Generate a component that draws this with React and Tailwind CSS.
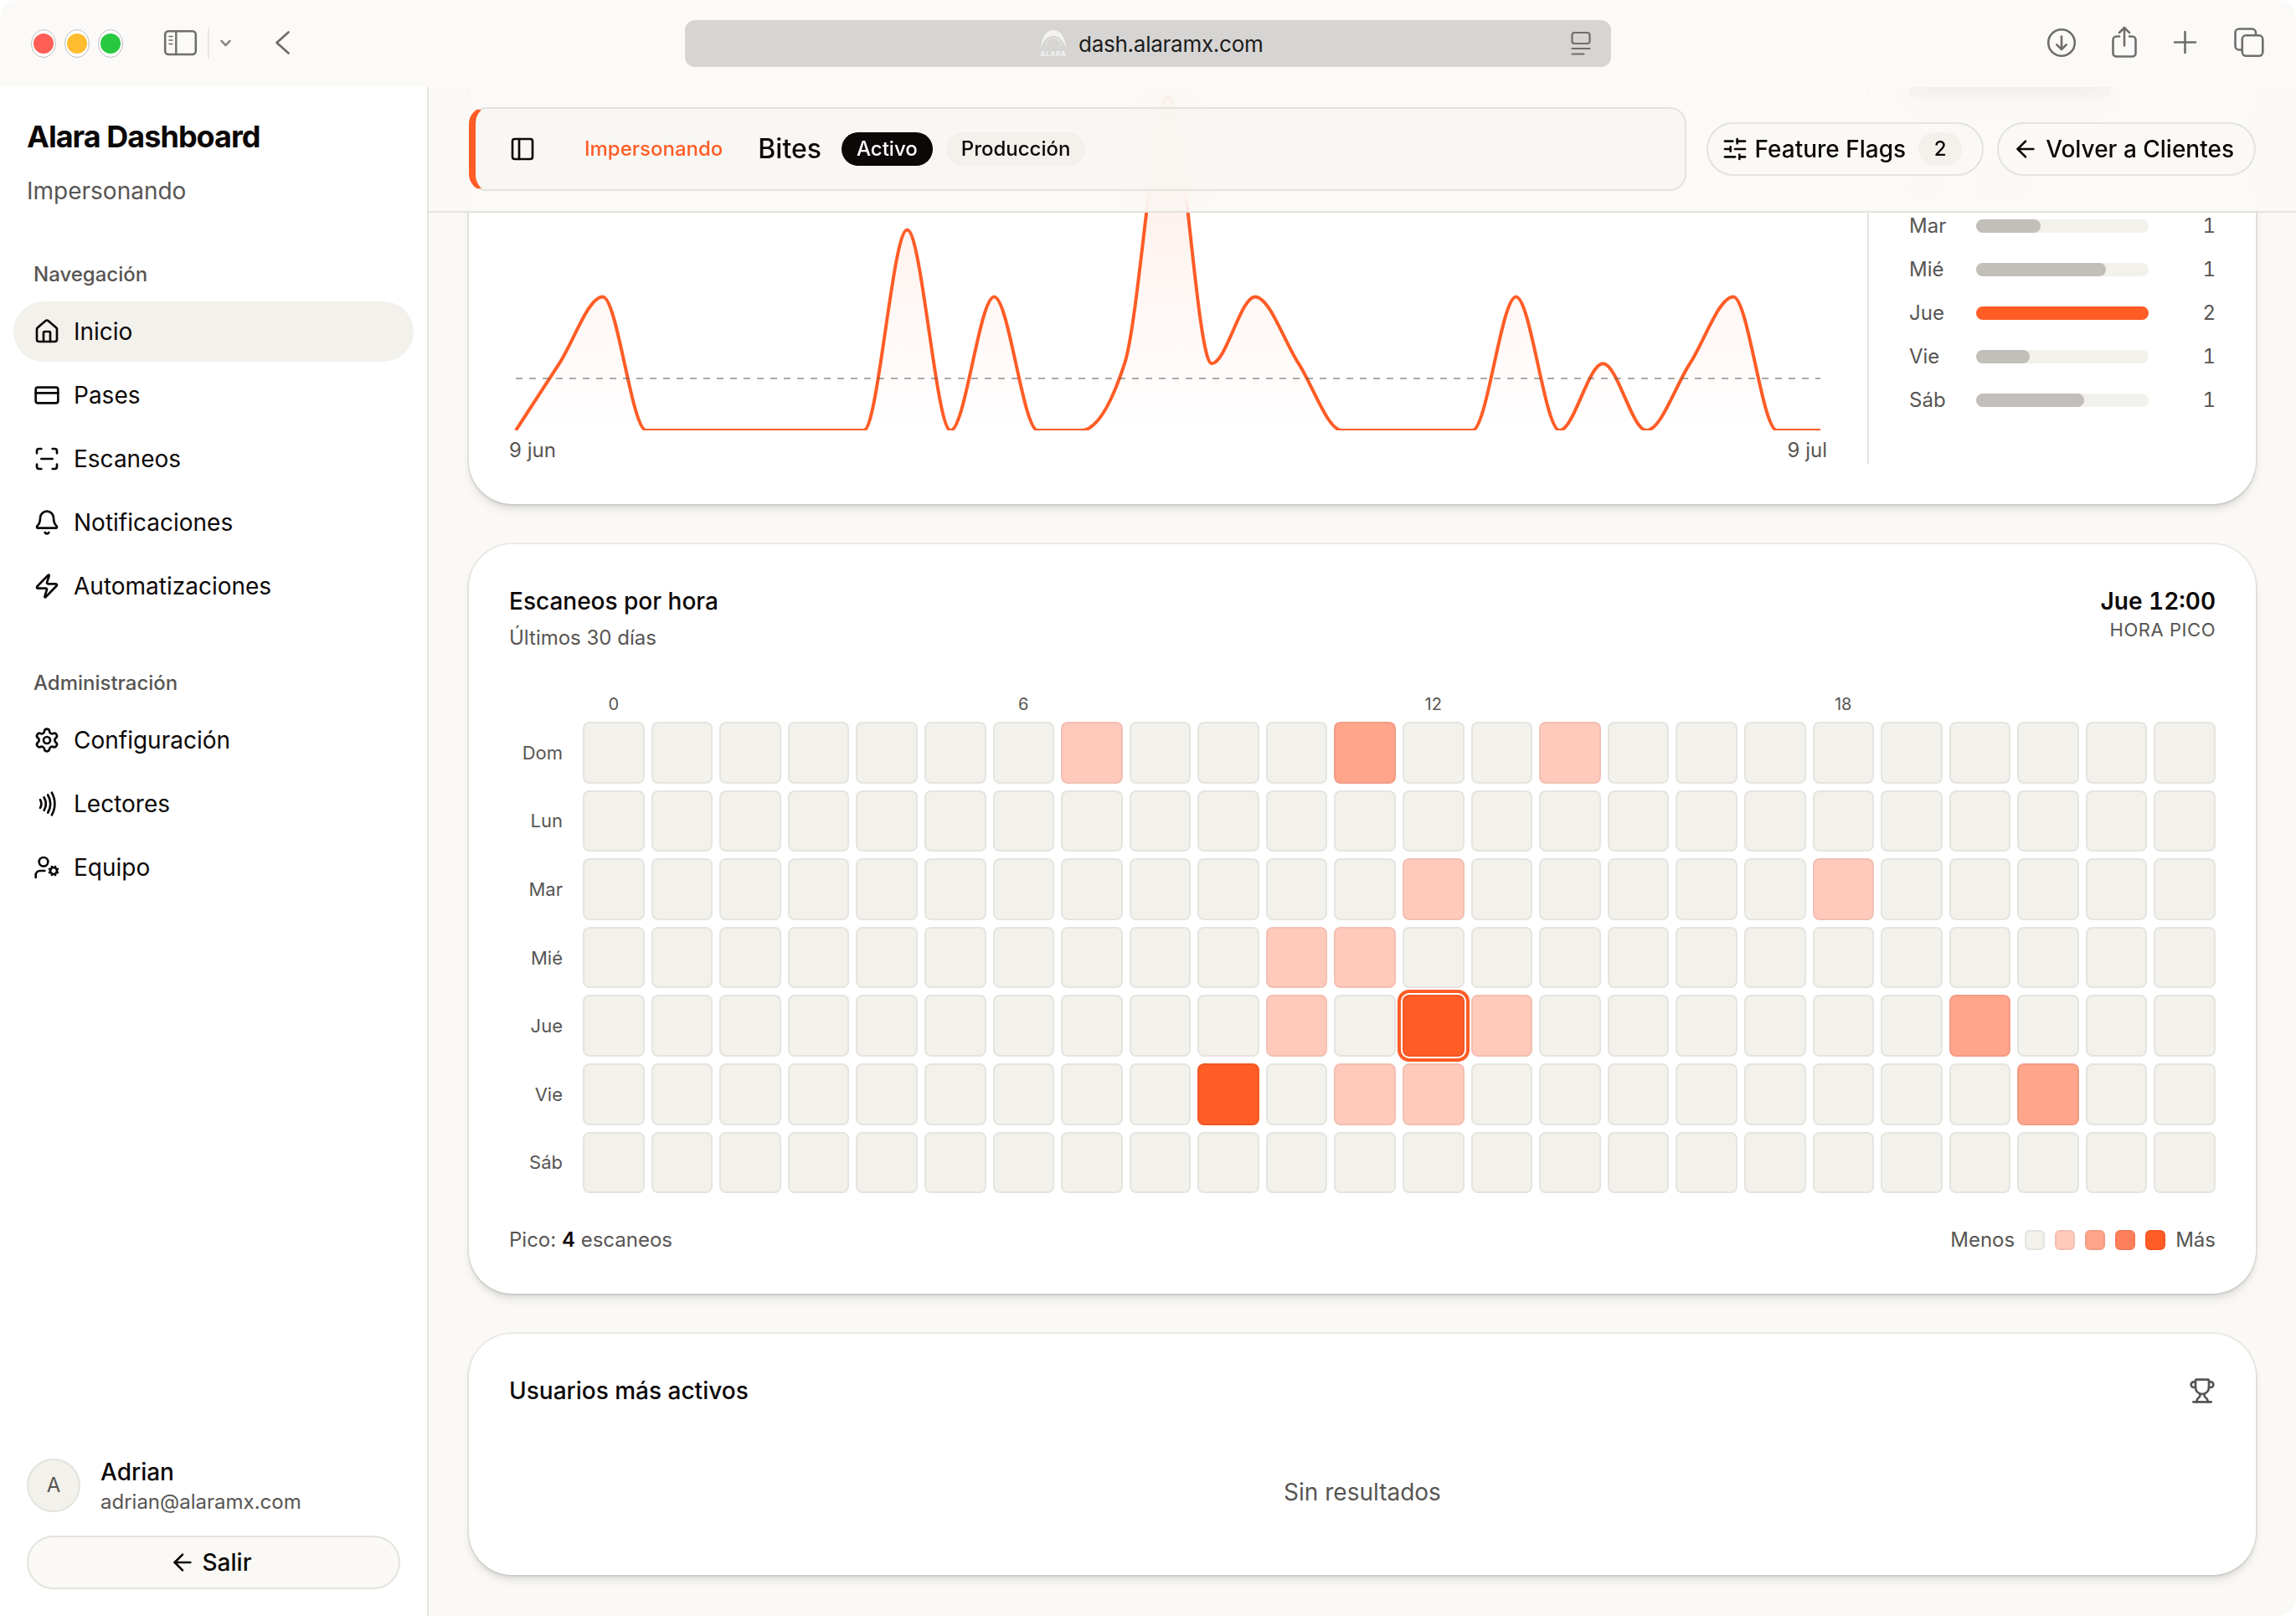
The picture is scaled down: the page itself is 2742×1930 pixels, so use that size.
import React from 'react';
import {
  ArrowLeft,
  Bell,
  CreditCard,
  House,
  Nfc,
  PanelLeft,
  ScanLine,
  Settings,
  SlidersHorizontal,
  Trophy,
  UserCog,
  Zap,
} from 'lucide-react';

const navItems = [
  { label: "Inicio", icon: House, active: true },
  { label: "Pases", icon: CreditCard },
  { label: "Escaneos", icon: ScanLine },
  { label: "Notificaciones", icon: Bell },
  { label: "Automatizaciones", icon: Zap },
];

const adminItems = [
  { label: "Configuración", icon: Settings },
  { label: "Lectores", icon: Nfc },
  { label: "Equipo", icon: UserCog },
];

const weekdays = [
  { day: "Mar", width: 37.4, value: 1 },
  { day: "Mié", width: 75.2, value: 1 },
  { day: "Jue", width: 100, value: 2, top: true },
  { day: "Vie", width: 31, value: 1 },
  { day: "Sáb", width: 62.7, value: 1 },
];

const dailyScans = [0, 1, 2, 0, 0, 0, 0, 0, 0, 3, 0, 2, 0, 0, 1, 5, 1, 2, 1, 0, 0, 0, 0, 2, 0, 1, 0, 1, 2, 0, 0];

const dayNames = ["Dom", "Lun", "Mar", "Mié", "Jue", "Vie", "Sáb"];
const hours = Array.from({ length: 24 }, (_, i) => i);

// "day-hour" -> intensity level
const heat = {
  "0-7": 1, "0-11": 2, "0-14": 1,
  "2-12": 1, "2-18": 1,
  "3-10": 1, "3-11": 1,
  "4-10": 1, "4-12": 4, "4-13": 1, "4-20": 2,
  "5-9": 4, "5-11": 1, "5-12": 1, "5-21": 2,
};

const levels = ["bg-[#f3f1eb]", "bg-[#ffcabb]", "bg-[#ffa58c]", "bg-[#ff815c]", "bg-[#ff5c26]"];

// Monotone cubic interpolation
const monotonePath = (points) => {
  const n = points.length;
  const s = [];
  for (let i = 0; i < n - 1; i++) {
    s.push((points[i + 1][1] - points[i][1]) / (points[i + 1][0] - points[i][0]));
  }
  const t = points.map((_, i) => {
    if (i === 0 || i === n - 1) return null;
    const p = (s[i - 1] + s[i]) / 2;
    return (Math.sign(s[i - 1]) + Math.sign(s[i])) * Math.min(Math.abs(s[i - 1]), Math.abs(s[i]), 0.5 * Math.abs(p));
  });
  t[0] = (3 * s[0] - t[1]) / 2;
  t[n - 1] = (3 * s[n - 2] - t[n - 2]) / 2;

  let d = `M${points[0][0]},${points[0][1]}`;
  for (let i = 0; i < n - 1; i++) {
    const [x0, y0] = points[i];
    const [x1, y1] = points[i + 1];
    const dx = (x1 - x0) / 3;
    d += `C${x0 + dx},${y0 + dx * t[i]},${x1 - dx},${y1 - dx * t[i + 1]},${x1},${y1}`;
  }
  return d;
};

const ScansChart = () => {
  const points = dailyScans.map((v, i) => [8 + (i * 1558) / 30, 410 - v * 79.8]);
  const line = monotonePath(points);

  return (
    <svg width="1574" height="410" viewBox="0 0 1574 410" className="block">
      <defs>
        <linearGradient id="scans" x1="0" y1="11" x2="0" y2="410" gradientUnits="userSpaceOnUse">
          <stop offset="0" stopColor="#ff5c26" stopOpacity="0.12" />
          <stop offset="1" stopColor="#ff5c26" stopOpacity="0" />
        </linearGradient>
      </defs>
      <path d={`${line}V410H8Z`} fill="url(#scans)" />
      <path d={line} fill="none" stroke="#ff5c26" strokeWidth="4" />
      <line x1="8" y1="348" x2="1566" y2="348" stroke="#575553" strokeOpacity="0.5" strokeWidth="2" strokeDasharray="8 8" />
    </svg>
  );
};

const BrowserBar = () => (
  <div className="flex h-[104px] shrink-0 items-start bg-[#fbfaf8] text-[#6f6e6c]">
    <svg width="360" height="104" viewBox="0 0 360 104" fill="none" stroke="currentColor" strokeLinecap="round" strokeLinejoin="round">
      <g strokeWidth="0.7" stroke="#a3a3a3" fill="#fff">
        <ellipse cx="52" cy="52" rx="14.3" ry="16.5" />
        <ellipse cx="92" cy="52" rx="14.3" ry="16.5" />
        <ellipse cx="132" cy="52" rx="14.3" ry="16.5" />
      </g>
      <circle cx="52" cy="52" r="12" fill="#ff5f57" stroke="none" />
      <circle cx="92" cy="52" r="12" fill="#febc2e" stroke="none" />
      <circle cx="132" cy="52" r="12" fill="#28c840" stroke="none" />
      <rect x="197.2" y="37.2" width="36.6" height="27.8" rx="4" strokeWidth="2.6" />
      <path d="M210.3 37v28" strokeWidth="2.4" />
      <path d="M202 43.5h4M202 48h4M202 52.5h4" strokeWidth="1.6" />
      <path d="M249 34v36" stroke="#e8e7e5" strokeWidth="2" strokeLinecap="butt" />
      <path d="M264.5 48.8l5 5.3 5-5.3" strokeWidth="2.6" stroke="#8a8987" />
      <path d="M344.5 38.5L330.5 51l14 12.5" strokeWidth="2.8" />
    </svg>
    <div className="ml-[458px] mt-6 flex h-14 w-[1106px] items-center rounded-xl bg-[#d6d5d3] pr-[24px]">
      <div className="ml-[423px] flex w-[34px] flex-col items-center text-[#f4f3f2]">
        <svg width="34" height="24" viewBox="0 0 34 24">
          <path d="M2 22C3 9 8 0 17 0s14 9 15 22C29 12 24 7 17 7S5 12 2 22z" fill="currentColor" />
          <path d="M7 19C9 12 13 9.5 17 9.5S25 12 27 19" fill="none" stroke="#e6e4e2" strokeWidth="1.5" />
        </svg>
        <span className="text-[8px] font-bold leading-[8px] tracking-[0.08em]">ALARA</span>
      </div>
      <span className="ml-[13px] pt-px text-[26px] leading-8 tracking-[-0.01em] text-[#1c1b1a]">dash.alaramx.com</span>
      <svg className="ml-auto" width="24" height="30" viewBox="0 0 24 30" fill="none" stroke="currentColor" strokeWidth="2.2" strokeLinecap="round">
        <rect x="1.5" y="2" width="21" height="13" rx="3" />
        <path d="M1.5 21h21M1.5 27.5h14" />
      </svg>
    </div>
    <svg className="ml-auto" width="342" height="104" viewBox="2400 0 342 104" fill="none" stroke="currentColor" strokeWidth="2.6" strokeLinecap="round" strokeLinejoin="round">
      <circle cx="2462" cy="51" r="15.8" />
      <path d="M2462 43.5v15M2456.3 53.3l5.7 5.7 5.7-5.7" />
      <path d="M2531 43.5h-3.5a4 4 0 0 0-4 4v16a4 4 0 0 0 4 4h19a4 4 0 0 0 4-4v-16a4 4 0 0 0-4-4h-3.5M2537 54.5V33.5M2531 39l6-6 6 6" />
      <path d="M2609.5 38v25M2597 50.5h25" />
      <rect x="2677.8" y="42.3" width="24.5" height="24.5" rx="4.5" />
      <path d="M2677.5 59.5h-3.5a4.5 4.5 0 0 1-4.5-4.5V39a4.5 4.5 0 0 1 4.5-4.5h15.5a4.5 4.5 0 0 1 4.5 4.5v3" />
    </svg>
  </div>
);

const NavGroup = ({ title, items }) => (
  <div className="px-4">
    <div className="flex h-16 items-center pl-6 text-[24px] font-medium text-[#575553]">{title}</div>
    <div className="flex flex-col gap-1">
      {items.map(({ label, icon: Icon, active }) => (
        <div key={label} className={`flex h-[72px] items-center gap-4 rounded-full px-6 text-[28px] ${active ? "bg-[#f3f1ec]" : ""}`}>
          <Icon size={32} />
          <span>{label}</span>
        </div>
      ))}
    </div>
  </div>
);

const Sidebar = () => (
  <aside className="flex w-[512px] shrink-0 flex-col border-r-2 border-[#e4e3de] bg-white">
    <div className="px-8 pt-[39px]">
      <h1 className="text-[36px] font-bold leading-[40px] tracking-[-0.027em]">Alara Dashboard</h1>
      <p className="mt-[25px] text-[28px] leading-[40px] text-[#575553]">Impersonando</p>
    </div>
    <nav className="mt-12 flex flex-col gap-12">
      <NavGroup title="Navegación" items={navItems} />
      <NavGroup title="Administración" items={adminItems} />
    </nav>
    <div className="mt-auto px-8 pb-8">
      <div className="flex h-16 items-center gap-6">
        <div className="flex size-16 items-center justify-center rounded-full border-2 border-[#e4e3de] bg-[#f3f1ec] text-[24px] text-[#575553]">A</div>
        <div className="pt-[3px]">
          <p className="text-[28px] font-medium leading-[36px]">Adrian</p>
          <p className="text-[24px] leading-[35px] text-[#575553]">adrian@alaramx.com</p>
        </div>
      </div>
      <button className="mt-7 flex h-16 w-full items-center justify-center gap-2 rounded-full border-2 border-[#e4e3de] bg-[#faf9f5] pr-2 text-[28px] font-medium">
        <ArrowLeft size={32} />
        Salir
      </button>
    </div>
  </aside>
);

const TopBar = () => (
  <header className="relative z-10 flex h-[150px] shrink-0 items-center gap-6 border-b-2 border-[#e4e3de] bg-[#faf9f6]/80 px-12 backdrop-blur-[20px]">
    <div className="flex h-[100px] flex-1 items-center rounded-[20px] border-2 border-l-8 border-[#e4e3de] border-l-[#ff5c26] bg-[#f7f5f1]/50 pl-10">
      <PanelLeft size={32} />
      <span className="ml-[58px] text-[24px] font-medium text-[#ff5c26]">Impersonando</span>
      <span className="ml-[42px] text-[32px] font-medium">Bites</span>
      <span className="ml-6 flex h-10 items-center rounded-full bg-[#0c0807] px-[18px] text-[24px] font-medium text-white">Activo</span>
      <span className="ml-4 flex h-10 items-center rounded-full bg-[#f3f1ec] px-[18px] text-[24px] font-medium">Producción</span>
    </div>
    <div className="flex items-center gap-4">
      <button className="flex h-16 items-center gap-2 rounded-full border-2 border-[#e4e3de] bg-[#faf9f5] pl-4 pr-6 text-[28px] font-medium">
        <SlidersHorizontal size={32} />
        Feature Flags
        <span className="ml-[7px] flex h-10 w-[52px] items-center justify-center rounded-full bg-[#f3f1ec] text-[24px]">2</span>
      </button>
      <button className="flex h-16 items-center gap-2 rounded-full border-2 border-[#e4e3de] bg-[#faf9f5] pl-4 pr-6 text-[28px] font-medium">
        <ArrowLeft size={32} />
        Volver a Clientes
      </button>
    </div>
  </header>
);

const Card = ({ className, children }) => (
  <section className={`rounded-[52px] bg-white px-12 shadow-[0_0_0_2px_rgba(12,8,7,0.06),0_8px_12px_-2px_rgba(0,0,0,0.1),0_4px_8px_-4px_rgba(0,0,0,0.12)] ${className}`}>
    {children}
  </section>
);

const ActivityCard = () => (
  <Card className="flex h-[538px] shrink-0 pb-12 pt-10">
    <div className="w-[1574px]">
      <ScansChart />
      <div className="mt-2 flex justify-between text-[24px] leading-8 text-[#575553]">
        <span>9 jun</span>
        <span>9 jul</span>
      </div>
    </div>
    <div className="ml-12 flex flex-1 flex-col border-l-2 border-[#e4e3de] pl-12">
      <div className="h-3 w-[240px] bg-[#c2beb9]" />
      <div className="mt-[94px] flex h-4 gap-10">
        <div className="w-10 bg-[#c2beb9]/40" />
        <div className="w-16 bg-[#c2beb9]/40" />
      </div>
      <div className="mt-[28px] flex flex-col gap-5">
        {weekdays.map((row) => (
          <div key={row.day} className="flex h-8 items-center gap-4 text-[24px] text-[#575553]">
            <span className="w-16">{row.day}</span>
            <div className="h-4 flex-1 rounded-full bg-[#f3f1ec]">
              <div className={`h-full rounded-full ${row.top ? "bg-[#ff5c26]" : "bg-[#c2beb9]"}`} style={{ width: `${row.width}%` }} />
            </div>
            <span className="w-16 text-right tabular-nums">{row.value}</span>
          </div>
        ))}
      </div>
    </div>
  </Card>
);

const HeatmapCard = () => (
  <Card className="flex h-[895px] shrink-0 flex-col pb-12 pt-12">
    <div className="flex justify-between">
      <div>
        <h2 className="text-[28px] font-medium leading-[40px]">Escaneos por hora</h2>
        <p className="mt-[8px] text-[24px] leading-8 text-[#575553]">Últimos 30 días</p>
      </div>
      <div className="text-right">
        <p className="text-[28px] font-semibold leading-[40px] tabular-nums">Jue 12:00</p>
        <p className="text-[22px] leading-[28px] tracking-[0.025em] text-[#575553]">HORA PICO</p>
      </div>
    </div>

    <div className="mt-[47px] flex flex-col gap-2">
      <div className="-mb-[3px] flex h-8 items-center gap-2 pl-[88px] text-center text-[20px] text-[#575553]">
        {hours.map((h) => (
          <span key={h} className="w-0 flex-1">{h % 6 === 0 ? h : ""}</span>
        ))}
      </div>
      {dayNames.map((day, d) => (
        <div key={day} className="flex items-center gap-6">
          <span className="w-16 text-right text-[22px] leading-8 text-[#575553]">{day}</span>
          <div className="grid flex-1 grid-cols-24 gap-2">
            {hours.map((h) => {
              const peak = d === 4 && h === 12;
              return (
                <div
                  key={h}
                  className={`aspect-square rounded-[8px] border-2 border-black/5 ${levels[heat[`${d}-${h}`] || 0]} ${peak ? "shadow-[0_0_0_2px_#fff,0_0_0_6px_#ff5c26]" : ""}`}
                />
              );
            })}
          </div>
        </div>
      ))}
    </div>

    <div className="mt-auto flex justify-between text-[24px] leading-8 text-[#575553]">
      <span>Pico: <b className="font-semibold text-[#0c0807]">4</b> escaneos</span>
      <div className="flex items-center gap-3">
        <span>Menos</span>
        {levels.map((level) => (
          <span key={level} className={`size-6 rounded-[6px] border-2 border-black/5 ${level}`} />
        ))}
        <span>Más</span>
      </div>
    </div>
  </Card>
);

const TopUsersCard = () => (
  <Card className="h-[288px] shrink-0 pt-12">
    <div className="flex items-center justify-between">
      <h2 className="text-[28px] font-medium leading-[40px]">Usuarios más activos</h2>
      <Trophy size={32} className="text-[#575553]" />
    </div>
    <p className="mt-[81px] text-center text-[28px] leading-[40px] text-[#575553]">Sin resultados</p>
  </Card>
);

const App = () => {
  return (
    <div className="h-[1930px] w-[2742px] bg-white">
      <div className="flex h-full flex-col overflow-hidden rounded-[22px] bg-[#faf9f5] font-['Inter',sans-serif] text-[#0c0807]">
        <BrowserBar />
        <div className="flex min-h-0 flex-1">
          <Sidebar />
          <main className="flex flex-1 flex-col overflow-hidden">
            <TopBar />
            {/* Content is scrolled under the header */}
            <div className="-mt-[190px] flex flex-col gap-12 px-12">
              <ActivityCard />
              <HeatmapCard />
              <TopUsersCard />
            </div>
          </main>
        </div>
      </div>
    </div>
  );
};

export default App;
